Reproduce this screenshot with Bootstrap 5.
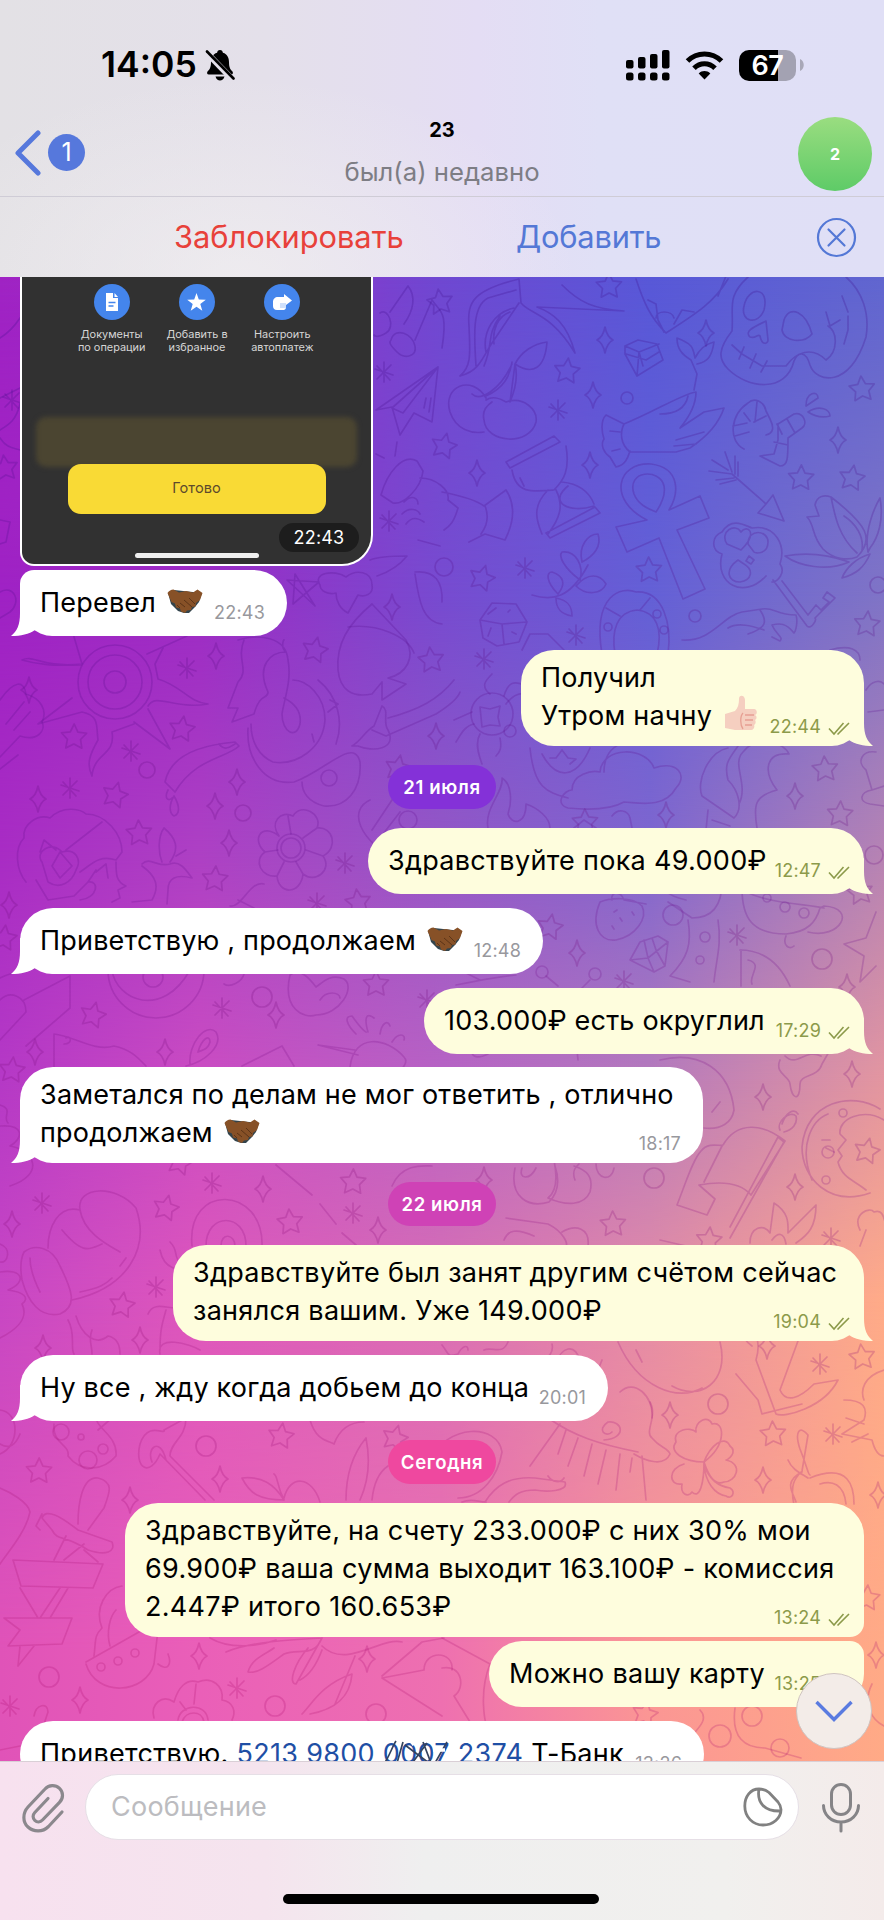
<!DOCTYPE html>
<html lang="ru">
<head>
<meta charset="utf-8">
<meta name="viewport" content="width=device-width, initial-scale=1">
<title>Чат</title>
<link href="https://cdn.jsdelivr.net/npm/bootstrap@5.3.0/dist/css/bootstrap.min.css" rel="stylesheet">
<style>
body{font-family:Inter,"Liberation Sans",sans-serif;background:#fff;color:#000;width:884px;height:1920px;overflow:hidden}
svg{display:block;flex:none}
.topbar{height:277px;background:radial-gradient(340px 200px at 240px 277px,rgba(244,242,242,.6),rgba(244,242,242,0)),linear-gradient(90deg,#e3e1e5 0%,#e4e0ea 30%,#e4ddf4 54%,#e0e0f6 68%,#e0dff6 100%)}
.statusbar{height:97px;padding:35px 80px 0 101px}
.barpart{height:60px}
.clock{font-size:35.5px;font-weight:600;line-height:60px;letter-spacing:0}
.battery{width:57px;height:31px;border-radius:10px;background:linear-gradient(90deg,#000 68%,#a3a2b2 68%);color:#fff;font-weight:600;font-size:27px;line-height:31px;letter-spacing:-.5px;margin-left:15px}
.navrow{height:100px;border-bottom:1.5px solid #cfccd6;padding:0 12px 0 15px}
.side{width:80px}
.unread{width:37px;height:37px;background:#5678dc;color:#fff;font-size:25px;line-height:37px;margin-left:6px}
.peer{font-size:20px;font-weight:700;line-height:24px;margin-top:21px;margin-left:-3px}
.seen{font-size:25.7px;line-height:32px;color:#7d7d84;margin-top:14px;margin-left:-3px}
.avatar{width:74px;height:74px;background:linear-gradient(#9add80,#5ecb67);color:#fff;font-weight:700;font-size:16px;margin-top:20px}
.actions{height:80px;font-size:30.8px;padding-left:174px;padding-right:27px}
.block{color:#e8413a;width:342px}.add{color:#5478d6;letter-spacing:-.2px}
.chat{height:1484px;overflow:hidden}
.mesh{inset:0}
.m1{background:linear-gradient(90deg,#a023c4,#9a2cc8 22.6%,#6f48d2 50%,#5858d8 73.5%,#6166d0)}
.m2{background:linear-gradient(90deg,#9f22c4,#9c2bc4 22.6%,#774bd0 50%,#6460d6 73.5%,#8074c6);-webkit-mask-image:linear-gradient(transparent 0,#000 323px);mask-image:linear-gradient(transparent 0,#000 323px)}
.m3{background:linear-gradient(90deg,#a82cc4,#ad40c4 22.6%,#9457c6 50%,#7e66cf 73.5%,#b683b4);-webkit-mask-image:linear-gradient(transparent 323px,#000 573px);mask-image:linear-gradient(transparent 323px,#000 573px)}
.m4{background:linear-gradient(90deg,#b539c6,#cb4cc2 22.6%,#b863c4 50%,#b67abc 73.5%,#e396a0);-webkit-mask-image:linear-gradient(transparent 573px,#000 803px);mask-image:linear-gradient(transparent 573px,#000 803px)}
.m5{background:linear-gradient(90deg,#c847c4,#de57bc 22.6%,#d96eb4 50%,#e58ca6 73.5%,#ffab88);-webkit-mask-image:linear-gradient(transparent 803px,#000 1023px);mask-image:linear-gradient(transparent 803px,#000 1023px)}
.m6{background:linear-gradient(90deg,#e053b8,#ea5fb8 22.6%,#ee70b0 50%,#fb9694 73.5%,#ffaa86);-webkit-mask-image:linear-gradient(transparent 1023px,#000 1373px);mask-image:linear-gradient(transparent 1023px,#000 1373px)}
.doodles{fill:none;stroke-width:1.7;stroke-linecap:round;stroke-linejoin:round}
.feed{padding:0 20px}
.photo{width:353px;height:289px;border:2px solid #fff;border-top:0;border-radius:0 0 31px 14px;background:#313131;overflow:hidden}
.tools{padding:7px 46px 0 47px}
.tool{width:85.5px;font-size:10.9px;line-height:12.6px;color:#d6d6d6;white-space:nowrap}
.dot{width:36px;height:36px;background:#4485ec;margin-bottom:8px}
.ghost{height:50px;margin:64px 14px 0 14px;border-radius:10px;background:#4b4531;filter:blur(2.5px)}
.done{width:258px;height:50px;margin:-3px auto 0;background:#f9da35;border-radius:13px;color:#5d4a2c;font-size:14.6px;position:relative}
.homelet{width:124px;height:5px;background:#efefef;margin-top:39px}
.stamp{right:12px;bottom:12px;width:80px;height:29px;background:#1d1d1d;color:#fff;font-size:18px;line-height:29px;letter-spacing:.2px}
.bubble{position:relative;isolation:isolate;font-size:27px;line-height:38px;white-space:nowrap;border-radius:33px;padding:9px 22px 11px 20px;height:96px;letter-spacing:.2px}
.figures{letter-spacing:.3px}
.solo{height:66px;line-height:66px;padding-top:0;padding-bottom:0}
.in{background:#fff;align-self:flex-start}
.out{background:#fefddd;align-self:flex-end;padding-right:14px}
.multi{width:560px}
.time{font-size:18px;line-height:18px;letter-spacing:.2px;color:#98989d;margin-bottom:-1px}
.solo .time{margin-bottom:14px}
.out .time{color:#8c9a4a;gap:7px}
.tail{position:absolute;z-index:-1;bottom:0;left:-9px}
.out .tail{left:auto;right:-9px;transform:scaleX(-1)}
.emo{display:inline-block;vertical-align:-3px;margin-left:3px}
.thumb{vertical-align:-6px;margin-top:-8px}
.day{width:108px;height:44px;font-size:18.6px;line-height:44px;font-weight:600;color:#fff;align-self:center;text-align:center;letter-spacing:.6px;margin-top:19px}
.lnk{color:#1f4fa5}
.scrollbtn{right:12px;bottom:12px;width:76px;height:76px;background:#f3ece8;border:1.5px solid #cfc3c0}
.composer{height:159px;background:linear-gradient(90deg,#f7e1ef 0%,#f5e4ee 30%,#efefef 48%,#f1f0ee 82%,#f4ebea 100%);border-top:1px solid #d9cfd6;padding:12px 23px 0 21px}
.field{width:714px;height:66px;border-radius:33px;background:#fff;border:1px solid #e6dfe6;padding:0 15px 0 25px;font-size:27px;letter-spacing:.25px;color:#bcbcc0;margin-left:20px}
.home{width:316px;height:10px;background:#000;margin:54px auto 0}
</style>
</head>
<body>
<svg width="0" height="0" class="position-absolute">
<defs>
<path id="star" d="M0-13L3.8-5 12.6-4 6.6 2.4 8 11 0 7-8 11-6.6 2.4-12.6-4-3.8-5Z"/>
<path id="spark" d="M0-13Q2-3 8 0 2 3 0 13-2 3-8 0-2-3 0-13Z"/>
<path id="burst" d="M0-10V10M-9-3 9 3M-7 7 7-7M-7-6 6 8"/>
<g id="shake"><path fill="#33444c" d="M1 4 7 1l28 3-3 9-4 5-6 6h-5l-6-2-7-7Z"/><path fill="#875127" d="M.5 4C2 2 4 .5 6.500.5L12 3.500 19 2l7 1.500L30.500.5 35.500 4 33 11l-4 3-.5 3.500-3.500.5-1 3-4 .5-2 2.500-4-1.500-1-3-4-1-1-4-3.500-1.500Z"/><path d="M13 14l5 4M17 11l8 7M22 9l6 6M10 16l3 3" stroke="#5c3417" stroke-width="1" fill="none"/></g>
<g id="tick"><path d="M1 6.500 6 12 15.500 1M9.500 12.500 21 1" fill="none" stroke="#8c9a4a" stroke-width="1.600"/></g>
<path id="tl" d="M9 0V13C9 25 6 31 0 36 10 36 18 34 24 30L42 36 40 8Z"/>
</defs>
</svg>

<header class="topbar">
 <div class="statusbar d-flex justify-content-between">
  <div class="barpart d-flex align-items-center"><span class="clock">14:05</span>
   <svg class="ms-2" width="30" height="32" viewBox="0 0 30 32"><path d="M15 1c1.700 0 2.800 1.200 2.900 2.700C22.500 5 24 9 24 13c0 6 1.500 7.500 3.500 9.500.8 1 .5 3-1.300 3H3.800c-1.800 0-2.100-2-1.300-3C4.500 20.500 6 19 6 13c0-4 1.500-8 6.100-9.300C12.200 2.200 13.300 1 15 1ZM10.500 27.500h9c-.6 2.500-2.500 4-4.500 4s-3.900-1.500-4.500-4Z"/><path d="M2 4 28 31" stroke="#e4e0ea" stroke-width="6"/><path d="M2 2.500 28.500 29.500" stroke="#000" stroke-width="2.600" stroke-linecap="round"/></svg>
  </div>
  <div class="barpart d-flex align-items-center">
   <svg width="44" height="32" viewBox="0 0 44 32"><rect x="0" y="11" width="7.500" height="8.500" rx="2"/><rect x="12" y="8" width="7.500" height="11.500" rx="2"/><rect x="24" y="5" width="7.500" height="14.500" rx="2"/><rect x="36" y="1" width="7.500" height="18.500" rx="2"/><rect x="0" y="23.500" width="7.500" height="8" rx="2.500"/><rect x="12" y="23.500" width="7.500" height="8" rx="2.500"/><rect x="24" y="23.500" width="7.500" height="8" rx="2.500"/><rect x="36" y="23.500" width="7.500" height="8" rx="2.500"/></svg>
   <svg style="margin-left:15px" width="39" height="30" viewBox="0 0 39 30"><path d="M2.500 11C12 1.500 27 1.500 36.500 11M9 18.300C15 12.300 24 12.300 30 18.300" fill="none" stroke="#000" stroke-width="5"/><path d="M19.500 29.500l-5.800-6c3.400-3.200 8.200-3.200 11.600 0Z"/></svg>
   <div class="battery text-center">67</div>
   <svg width="4" height="12" class="ms-1" viewBox="0 0 4 12"><path d="M0 0C5 2 5 10 0 12Z" fill="#a9a8b8"/></svg>
  </div>
 </div>
 <div class="navrow d-flex justify-content-between">
  <div class="side d-flex align-items-center" style="padding-top:12px">
   <svg width="27" height="46" viewBox="0 0 27 46"><path d="M23 3 3 23 23 43" fill="none" stroke="#5678dc" stroke-width="5" stroke-linecap="round" stroke-linejoin="round"/></svg>
   <div class="unread rounded-circle text-center">1</div>
  </div>
  <div class="text-center"><div class="peer">23</div><div class="seen">был(а) недавно</div></div>
  <div class="side d-flex justify-content-end"><div class="avatar rounded-circle d-flex align-items-center justify-content-center">2</div></div>
 </div>
 <div class="actions d-flex align-items-center">
  <div class="block">Заблокировать</div><div class="add">Добавить</div>
  <svg class="ms-auto" width="41" height="41" viewBox="0 0 41 41"><g fill="none" stroke="#5478d6" stroke-width="2.200" stroke-linecap="round"><circle cx="20.500" cy="20.500" r="18.500"/><path d="M12.500 12.500l16 16m0-16-16 16"/></g></svg>
 </div>
</header>

<main class="chat position-relative">
 <div class="mesh position-absolute m1"></div><div class="mesh position-absolute m2"></div><div class="mesh position-absolute m3"></div><div class="mesh position-absolute m4"></div><div class="mesh position-absolute m5"></div><div class="mesh position-absolute m6"></div>
 <svg class="doodles position-absolute top-0 start-0" width="884" height="1484" viewBox="0 277 884 1484" stroke="url(#ink)">
  <defs><linearGradient id="ink" gradientUnits="userSpaceOnUse" x1="0" y1="277" x2="0" y2="1761"><stop offset="0" stop-color="#3c0c8c" stop-opacity=".26"/><stop offset=".4" stop-color="#640a8c" stop-opacity=".23"/><stop offset=".75" stop-color="#a00f78" stop-opacity=".23"/><stop offset="1" stop-color="#b4146e" stop-opacity=".25"/></linearGradient></defs>
  <g id="bits"></g>
  <!-- swallow wing -->
  <path d="M460 376c12-10 10-24 9-50-2-24 4-36 50-47l2 24c10 12 30 10 54 50-8-30-22-40-38-46l87 4c-30-2-44-8-62-26M460 376c16-4 20-12 30-30l29-43M476 366c-2-30-4-60 12-68l28-8M486 352c-4-20 8-40 28-44M494 344c-2-14 4-28 16-32M484 366c10-24 2-30 16-50"/>
  <!-- music notes -->
  <path d="M380 313c8-6 16 14 6 20s-12 2-12 2M390 312l18-26c8 10 6 24-4 38M391 340c4-14 22-6 24 6 2 10-10 14-18 6s-8-10-6-12ZM415 340l17-40c8 12 16 10 10 48"/>
  <!-- paper plane -->
  <path d="M376 410l62-43-6 55-18-9-14 22-8-28ZM392 408l46-41-35 46ZM424 408l2-10M429 412l2-14M376 454l8 4M397 442l-2 14"/>
  <!-- cherries -->
  <path d="M486 398c-14-24-44-12-36 14 6 18 22 22 34 20M486 400c6-4 14-2 20 2 18-6 32 8 30 20-6 24-50 22-52-2-2-8 2-14 8-18M472 394c8 8 28-4 40-30M486 396c18-8 24-20 26-34M510 402c6-14 8-26 5-38 6-12 18-20 32-22-2 26-14 34-32 22Z"/>
  <!-- heart pendant -->
  <path d="M636 279c8 24 14 38 30 54 28-18 48-30 62-54M648 300l8 4 2 16 6 12M656 318c0-8 16-8 18 0M674 324l8-14 12 2M718 296l8-20"/>
  <!-- skull -->
  <path d="M748 277c-22 20-14 30-16 54-14 18-14 28-4 38 20 20 58 24 66-8 4-10 12-10 16 4 6 18 40 24 56-28 4-24-4-46-20-60M744 306c4-20 26-20 20 4-6 16-24 12-20-4ZM784 320c6-16 22-8 28 14-8 10-28 8-30-4ZM766 321c-12 6-22 10-16 16 6 2 8-4 10-1 2 10 8 8 8 4ZM732 345l10 9 20 12 24 0c10-14 26-20 40-6 12-8 12-28 2-34M744 347l-5 12M756 354l-6 14M767 361l-6 11M826 312l4 14 10-6M842 296l6 16M848 316v14l-4 14"/>
  <!-- diamonds -->
  <path d="M625 346l13-6 19 4 6 16-26 16-12-22ZM625 346l14 6 20-8M639 352l4 14M639 352l-2 24M626 354l20 6 13-8"/>
  <path d="M630 960l10-18 18-6 10 6-3 24-11 6ZM630 960l18-2 20-16M648 958l-4-18M648 958l6 14M652 938l4 12 9 16"/>
  <!-- hand with mermaid tail -->
  <path d="M624 424l-18-9c-6 6-4 18-2 24-4 6 0 14 6 18l6 10c10-2 12-10 14-16M624 424c-4 8-4 20 6 28l46 0 14-4c12-8 28-22 34-40l-20 4-24 16c10-12 16-24 16-36-14 2-42 20-72 32ZM676 440l28-8M674 446l22-2M660 414c18 0 26-8 28-18M694 390l3-16-6-14c-10-6-14-12-14-22 16 6 16 10 18 20 4-8 10-14 19-16-2 14-6 20-17 22M610 431l10 1M612 451l8-2"/>
  <!-- candy canes -->
  <path d="M744 449c-16-8-14-34 4-46 6-6 16-2 18 8l4 8c4 8 4 14-4 16M733 426l14-3M735 436l14-4M744 413l6 8M757 402l-2 20M766 416l-12 6M778 424l16-10c10-2 14 10 8 14l-14 10c0 20 0 28-8 28l-20-10 14-2 4-14ZM787 419l8 14M777 424l5 10M774 442l14 3M806 406c0-14 12-16 12-8ZM808 412c12-8 22-2 22 4-8 2-16 0-22-4Z"/>
  <!-- arrow -->
  <path d="M732 474l34 30-8 9 26 8-11-26-7 9M732 474l-23-3M728 470l-16-10M734 478l-18 2M736 480l-16 4M732 472l-7-20M735 474v-18M738 476v-14"/>
  <!-- hourglass -->
  <path d="M506 462l48-26 6 6-50 26ZM512 470c4 24 20 22 42 20 10-10 16-20 12-44M548 490c-16 16-12 30-6 44M562 482c20 2 28 12 32 22M546 533l49-26 5 6-50 25ZM556 490c8 16 4 28-8 44M520 478l4 8M568 486c-20 16 0 28 26 20"/>
  <!-- ankh -->
  <path d="M647 520c-40-20-30-58 4-56 30 4 28 30 18 46l31-14 9 22-32 12 28 59-22 10-24-61-32 14-11-25ZM634 494c-8-24 26-26 30-8 2 10-4 20-8 26-10-4-18-8-22-18Z"/>
  <!-- twig -->
  <path d="M532 595c20 6 38 4 56-30M558 594c-12-12-12-22-6-22 12 4 14 12 6 22ZM580 580c-16-12-22-24-18-28 14-2 22 14 18 28ZM582 562c-4-16 6-28 16-28 4 12-4 22-16 28ZM576 586c12-14 24-12 30-2-4 10-20 12-30 2ZM556 598c12 2 16 8 16 18-12-2-16-8-16-18Z"/>
  <!-- dice -->
  <path d="M480 620l12-17 24 1 11 18-8 20-22 4-14-8ZM480 620l22 4 25-2M502 624l2 20M488 614l8-6M508 612l2-2M488 636l3-8M512 632l4 2M522 650l8-16 18 0 16 16"/>
  <!-- handshake -->
  <path d="M381 495c6-22 22-42 36-34l6 10c-2 18-20 34-30 32ZM420 478c16 0 30 12 28 22l10 8c-4 14-8 18-14 22M404 502c8-8 14-4 14 2M402 514c8-8 16-4 18 0M406 524c6-8 12-6 18-2M418 540l22 6M442 492c20 4 34 8 42 14l22-16c8 12 10 28-1 50l-20-6-16 8M485 506c4 10 2 20-4 28"/>
  <!-- horseshoe -->
  <path d="M602 654c-10-60 20-68 34-62 28-2 36 34 32 62M615 654c-4-24 2-42 22-44 20 2 26 20 20 44M606 608l14 8M650 598l-10 12"/><circle cx="608" cy="627" r="4"/><circle cx="657" cy="614" r="4"/><circle cx="664" cy="630" r="4"/>
  <!-- key -->
  <path d="M766 576c-22 24-52 8-44-22-12-4-10-18 0-22 10-16 24-6 30-4 24-4 34 18 28 36 6 8-2 18-8 18M773 580l34 46c4 4 10-6 8-8l20-20-8-6-4 6 6 4-8 8-5-5-8 10-26-34M727 544c-8-12 8-22 14-12 6-8 18 0 0 18ZM748 544c0-16 20-14 20-2 0 12-12 12-14 10ZM738 560c-14 10-10 22 2 22 12-2 14-12 4-18ZM749 556l5 4-3 4-5-3Z"/>
  <!-- tulip -->
  <path d="M819 516l-12 1c8 8 4 18 16 32 10 10 24 12 34 8 18-18 10-32-26-60-6-2-14-2-16 8ZM831 497c4 20 8 40 26 56M844 516c12 8 20 20 18 34M868 552c-4-20 6-44 12-54 4 22-2 40-10 50ZM785 556c22-4 42-2 64 6-22 10-50 4-64-6ZM842 578c4-10 14-20 28-24-6 14-14 20-28 24Z"/>
  <!-- swallow lower -->
  <path d="M682 640c30 2 40-24 60-28l20-3c12-2 14 6 34 6 2 6 0 16-2 18-8-10-14-10-22-8 4 10 12 12 8 16l-8-4M728 628c10-6 24-2 36 2M760 610c8 12 6 18-12 24"/>
  <!-- fly agaric and big star -->
  <path d="M320 585c-8-12 14-16 26-8 10-8 26-6 26 8 2 10-8 12-14 10l-10 18c-8-4-12-12-12-20-8 2-16-2-16-8ZM370 560c10-4 24-4 37-4-8 10-18 16-30 20M287 580l32 2-26 22 2-30 20 32ZM415 572c20-2 28 10 27 30M415 574c4 28 8 48 27 50M348 627c30-4 60 10 66 26"/>
  <!-- sun -->
  <circle cx="115" cy="682" r="37"/><circle cx="115" cy="682" r="27"/><circle cx="115" cy="682" r="11"/>
  <path d="M147 654l40-18M81 665C50 666 36 664 22 660c12-6 18 8 60 4l-10-34M72 698l-34 26 44-12c18 4 14 14 16 28-8 14-12 24-6 36 2-24 24-20 20-44l22-8M148 709l22 40-36-27M148 706c8-14 26 4 60-2-20-2-26-18-50-25l-3-15 8-16"/>
  <path d="M0 700c14-20 24-20 26-6 14 4 22 16 16 28 4 8-4 20-22 14L0 757M18 755l-18 14M6 724l18-22M14 730l16-18"/>
  <!-- left edge sketches -->
  <path d="M0 338c10-6 16-14 20-20M0 398l20-10M0 430c10-6 16-10 20-26M0 438c6 10 14 10 20 12M0 592c14-8 22 10 10 20l-10 6M0 520l10 2-4 20-6 2"/>
  <!-- snake -->
  <path d="M244 640c-8 20 6 30-6 42l-10 26 10 0-6 14 22-8c6-22 14-14 14-22-12-26 2-40 18-40-6-4-2-14-2-12M238 640c20-6 48-4 50 20 4 20-4 40-6 54 0 18 14 26 18 10 2-14-8-22-16-26M293 680c14 0 32 16 32 40-2 28-28 46-52 42-14-6-22-20-22-38M248 728c-2 30 16 58 46 54 30-10 60-46 66-20 2 28-14 46-36 44-16-4-22-14-22-24M318 680c20 16 26 42 18 64M330 700l8 4M328 712l10-8M312 734l2 8"/><circle cx="329" cy="778" r="8"/>
  <!-- sabre -->
  <path d="M352 746c10-6 12-14 22-20l8-20c8 4 0 16 6 24 10 20-16 22-30 16ZM372 730l14 6 50-22c16-10 22-16 24-22M388 718c30-8 50-18 66-38"/>
  <!-- spade -->
  <path d="M338 670c2 20 14 28 34 24l10-12 0 18 24-16-18-6c18-4 28-20 18-38l-34-36c-24 20-36 40-34 66Z"/>
  <!-- fingers -->
  <path d="M165 782c4-20 24-36 70-40l4 4c-12 12-44 12-64 46ZM219 744c6 8 12 2 16 0M168 790c-4 8 0 12 4 8M174 796c-6 10-4 18 0 20 6-2 6-10 0-20Z"/>
  <path d="M485 1502c10-16 24-26 50-24l30 4c4 10-20 10-30 8-14 0-20 4-26 12M548 1476c4 6 12 8 16 2M462 1502c10-4 16 0 24 0"/>
  <!-- gypsy head -->
  <path d="M26 882c-10-12-12-34-2-44-2-14 14-24 26-20 14-14 32-8 36-4 20 0 36 20 36 38l-6 8c-18-6-26 6-36 12M102 822L66 850M36 880l12 20 26-4 14-14 8-12M42 862c-8-10 10-22 20-10 14-4 20 8 14 18-4 12-16 20-28 12ZM40 852l4-12 12 10M52 866l8-14 12 14-12 12ZM116 862c0 12 0 20 10 24l-8 4 2 8-8 4M96 872l10-8 2 14M80 900c18-2 20-20 8-18"/>
  <!-- apple -->
  <path d="M142 864c8-8 16 4 28 0 10-4 16 6 22 14-16-4-24 0-24 12l-1 14M142 866c14 10 18 20 10 34l-20 2M162 862c-4-10-4-26 2-34 12 10 16 20 6 34M176 856l10-6M264 884c-14-4-22 24-34 22M238 900l16 8"/>
  <!-- flowers -->
  <g id="flow"><circle cx="291" cy="848" r="14"/><circle cx="291" cy="848" r="10"/><path d="M279 836c-10-14 2-26 14-20 8-14 30-2 24 12 16-2 22 20 6 28 10 14-8 28-20 18-2 20-24 22-26 2-16 2-24-16-12-24-14-12-4-30 14-16ZM288 816l3 18M317 828l-14 10M323 856l-17-6M303 874l-7-12M277 876l7-14M265 852l13-2"/></g>
  <path d="M154 1718c-4-14 8-24 20-16 4-14 12-24 24-20 14-6 26 4 24 18 12 2 14 12 10 20M178 1720c2-16 28-18 30 0M182 1722c4-12 20-12 22 0M180 1702l6 8M196 1684l-2 20"/>
  <!-- spider -->
  <circle cx="492" cy="714" r="21"/><circle cx="510" cy="731" r="6"/><path d="M480 707l10 2 10-3-2 11 2 9-10-1-8 2ZM490 694c-10-8-4-14 2-20M504 696c4-14 10-16 22-10M506 704c6-8 12-12 20-10M472 712l-18 8M474 724c-10 2-14 12-18 18M480 734c-6 10 0 24 2 30M500 738c2 10 0 14-4 18"/>
  <!-- cloud -->
  <path d="M568 808c-14-4-4-18 4-18 0-16 20-20 28-18 2-26 46-26 54-4 24-8 34 8 22 20-12 22-40 14-52 14-14 8-36 8-56 6ZM530 748c4 40 16 44 38 50M542 754c14 26 34 26 48-6M550 758l6 0 6-8 6 8 8 1-6 5M604 772c0-20 12-28 20-28"/>
  <!-- goblet by the date -->
  <path d="M488 828c-4-20 16-36 14-50 10 6 10 24 6 36 4 12 18 10 18-10 12 4 24 14 24 24M574 828l10-8 12 8M612 816c6-8 16-6 18 2l2 10M398 860c-40-20-50-50-28-60M372 830l20-30M380 838l20-26"/><circle cx="408" cy="820" r="9"/>
  <!-- moon -->
  <path d="M739 804c10-20-8-40 4-52 16-20 42-8 46 2-24-2-26 18-12 36-22 6-24 14-20 38M728 748c-20 4-32 34-26 48l32 22c10-10 4-28-6-38-4-16 0-20 10-34M708 810l-2 20M712 820l18 6"/>
  <path d="M866 770c-10-8-4-20 10-18M866 770l6 20c-12 2-14 12-2 14l14 2M872 790l12-4M830 650c20-6 30 0 30 10M866 690c6-10 14-10 18-6M868 712l16-2"/>
  <!-- strawberry and bottle -->
  <path d="M600 902c-10 24 0 40 16 38 20-4 32-22 26-34-10-10-32-8-42-4ZM612 900c-2-8 8-10 12 0l22 4M612 926l2 3M620 918l2 3M632 912l2 3M614 912l3-2M686 900c-18-4-30-12-24-28M668 902l24 16c18 0 30-10 30-36M688 920c4 24 0 38-18 56l20 6M718 920c4 24-2 40-4 62"/><circle cx="705" cy="937" r="5"/><circle cx="700" cy="960" r="4"/><circle cx="673" cy="915" r="10"/>
  <!-- teapot -->
  <path d="M742 888c0 30 10 46 44 46 22-2 30-12 34-26l4-2c34 2 16 34-16 26M746 892c26 12 60 12 78 16M786 936c-4 10 4 14 8 10"/><circle cx="785" cy="907" r="5"/><circle cx="804" cy="913" r="5"/><circle cx="767" cy="898" r="4"/>
  <!-- seagull and spire -->
  <path d="M740 950c24 0 40 14 50 36M748 960c16 4 0 16 4 24M741 950v36M876 912l-10 26-22 6 20 12-4 26 16-16M456 985c20-4 40-8 60-10M480 980l-16-8M546 976l12 10M590 980l-8 8"/><circle cx="542" cy="972" r="6"/><circle cx="595" cy="974" r="6"/>
  <!-- envelope and disc at the left edge -->
  <path d="M24 1000l46-24 0 32-44 38M0 1000c10-10 26-4 26 12l-26 28M0 978c20-10 32-6 40-12"/><circle cx="156" cy="970" r="48"/><circle cx="153" cy="977" r="10"/><path d="M112 970c4 30 50 50 78 0M290 975c-8 34 14 44 26 40 24 0 40-28 28-36-14-6-22 4-28 8-6-8-16-20-26-12ZM320 1000c6-10 20-8 20-2M224 984c6 4 18-2 20-10"/>
  <path d="M54 1034c20 2 40 18 60 12 18 4 24 12 32 20M54 1034v34M64 1044c10 0 6-10 2-6M190 1064c-2-20 16-42 26-32 8 14-12 30-30 34M198 1052c4-14 12-18 12-10-2 8-8 8-12 10ZM242 1066l40-20 12 20M350 1067c4-34 36-30 54-10 4 4 0 10-4 14M355 1050l-37-5 40 10M356 1034c-10-10-12-18-4-18 6 8 10 14 14 16M368 1032c-4-14-2-20 6-14M380 1034c2-12 8-14 10-8M392 1042c6-10 14-8 12-2"/>
  <!-- boxing glove -->
  <path d="M48 1248c0-20 10-44 32-38-4-24 36-26 56-2 14 40-8 80-64 92M80 1210c4 24 30 36 40 42M62 1230c20 24 26 20 40 14M24 1252c10-8 28-6 36 14 12 24 18 40 0 48-20 4-32-12-38-34-2-12-2-20 2-28ZM30 1258c0 14 6 26 10 34M80 1292c20-4 26-8 32-14M120 1266l6-8M0 1244c12 4 8 20 0 18M0 1272c22-4 28 10 8 18 16 2 22 8 14 14 8 16-10 28-22 34"/>
  <!-- snail shell -->
  <path d="M192 1246c-6-64 72-60 70 0M206 1246c0-34 40-34 40 0M221 1246c0-14 14-12 14 0M160 1250c4 20 20 22 30 16M170 1242c8 8 4 12 8 18"/>
  <!-- flames and leaf -->
  <path d="M68 1320c8 14 2 28 6 34M76 1316c6 20 20 30 32 20 10 2 12 10 12 18M92 1330c-4 10 0 14 0 24M148 1314c6-14 20-4 36-6M160 1350c0-20 2-26 6-40M160 1354c-4-20 30-10 40-4M276 1165l36 30M320 1204l16 20M342 1233l14 12M392 1186c10-24 34-20 40-20M0 1105c14 4 2 12 8 18M0 1126c24-2 24 12 10 20 24 4 36 28 0 40"/>
  <!-- knots -->
  <path d="M515 1168c-6 30 14 40 34 34 10-10 10-24 6-36M554 1160c4 20 2 32-6 38 18 8 36 8 42-6 4-16-4-22-16-26M522 1168c-4 12 8 12 14 0M596 1164c0 16 16 18 18 4M575 1180c-4-10 2-14 4-16M506 1218l42 6c16 8 20 20 18 22M504 1240c4-10 12-12 30-4M562 1232c14-8 28-4 26 14M488 1054c-20 10-18-8-16-14M530 1050c4-20 36-30 50 0M576 1040l2 20M660 1060c40-10 70 10 74 50-2 12-12 20-30 18M712 1112l8-10"/>
  <!-- flag -->
  <path d="M677 1205c8-20 16-46 24-54 8-10 20-4 22-6 14-24 40-22 62-4l-34 54c-10-12-30-14-52-10l16 14-8 16ZM704 1182l18-36M730 1238l54-96-6-5-48 90M780 1130c-4-8 10-20 16-14 2 8-4 14-12 16M782 1124c4-12 12-16 16-10"/>
  <!-- ice cream -->
  <path d="M780 1060c-6 14 10 16 10 24 2 16 10 18 10 0 0-10 18-6 22-20l8-14M785 1056c12 12 20-8 36 0"/>
  <!-- moon face -->
  <path d="M870 1193c-40 14-68-14-68-46 4-46 50-56 78-38M884 1120c-20-12-46-2-44 14l6 6-8 10 4 6-4 6c4 16 16 18 28 28M812 1180c-14-34 0-60 16-66M822 1140l8 0M826 1148l8 4"/><circle cx="843" cy="1113" r="4"/><circle cx="828" cy="1152" r="6"/><circle cx="826" cy="1180" r="4"/>
  <!-- plant and bone -->
  <path d="M750 1243c0-16 14-20 20-10l4-30c16 10 14 22 14 30l28-28c0 22-8 30-20 38M772 1240c6-8 12-8 14 4M866 1230l-6 16M860 1230c-8-16 10-24 14-18 10-4 10 10 12 12M660 1240l26 6"/>
  <!-- ball and anchor -->
  <path d="M618 1342c20 46 60 60 84 46M720 1342c10 40-20 60-48 44M636 1350l6 12M620 1392c14-14 34 4 32 26M752 1346c-14-10-10-20-4-26 6 12 14 20 8 40l20 54c8 4 48-6 62-34l-24 4c-14 14-28 20-34 6l22-60M736 1374l22 26 4 14 40-10"/>
  <!-- octopus -->
  <path d="M442 1345c8 10 4 12 16 9 4-8 10-10 10-4M484 1350c8-4 18 6 24-8M556 1362c6-14 18-20 24-2l14 20 8-20M552 1344c2 8-4 14-8 16"/>
  <!-- eye -->
  <path d="M548 1418c26 18 50 26 90 34M560 1424l-30 42M566 1430l-8 24M578 1438l-10 28M592 1444l-8 32M606 1450l-8 34M620 1454l-4 36M632 1458l-2 14M642 1456l4 44M650 1402c8 14-6 30 2 36 8 10 16 10 18 16-6 14-26 6-36 0M604 1440c24-2 18-20 4-18-12 8-2 16 4 10"/>
  <!-- clover -->
  <path d="M704 1462c-20 0-36-10-28-20-4-12 14-16 20-10-2-10 12-18 16-8 12-4 16 20-8 38ZM704 1462c6-16 20-28 26-16 8 6-2 14-4 14 18 4 10 22-2 22-10 4-16-8-20-20ZM704 1462c0 20-4 38-12 30-4 6-12 2-10-8-14 2-14-16 2-20M704 1466c6 14 14 20 26 22 6 4 2 12-4 8-12-2-20-14-22-30"/>
  <!-- bananas -->
  <path d="M794 1505c-4-20 0-26 8-34l6-36c-8-10-14-4-8 14 8 20 8 26 10 26M788 1460c4 10 14 14 20 18M802 1472c-20 10-8 22-6 30M810 1478c40-16 44 10 44 26M820 1484c12-4 24 0 26 20M884 1370c-20 6-24 20-20 30M844 1400c20 0 24 8 20 20l-22 14 30 6c4 16 10 16 12 16M846 1418l18 6M852 1442l16-8"/>
  <!-- donut, match -->
  <path d="M54 1424c-2 20 16 20 14 32 14 18 36 14 48 0 2-20-20-28-20-38M0 1410c20 2 20 36 0 44M0 1444c10 6 16 0 20-10M98 1430l14-12"/><circle cx="61" cy="1432" r="8"/><circle cx="88" cy="1460" r="9"/><circle cx="103" cy="1449" r="5"/><circle cx="81" cy="1437" r="3"/>
  <path d="M205 1500l-45-46c-10 24-26 14-20-10 8-24 26-8 24-14l22-12c0 20-16 24-16 38l44 44M152 1462c-6-14 8-26 14-2M242 1478c20-2 32 6 42 22-24 0-34-6-42-22ZM284 1500c-8-16-6-24-10-26M284 1498c6-24 28-22 36 4M310 1420c6 20 16 20 24 24 6-16 16-22 30-22M346 1500c0-30 10-50 20-62 4 20 4 40-6 62M372 1500c2-20 10-30 16-34"/>
  <!-- dagger with ribbon -->
  <path d="M78 1524c0-20 4-48 20-46 16 4 12 14 6 30l-16 22M42 1518c4-10 18-2 36 12l34 12c4 10-6 14-24 8-24-16-30-8-36-20ZM40 1530l-4-4 6-12M66 1536l-12 24M84 1544l-20 16M13 1560l90 4-10 24-72-2ZM20 1588l18 30M68 1588l-18 30M60 1588l-20 30M84 1550l14 12M4 1618l68 0-10 26-54 2 12-16ZM34 1646l-16 20 2-20M0 1488c10 4 28 14 30 24-4 20-22 40-30 52"/>
  <!-- bowl -->
  <path d="M86 1662l60-34M86 1664c10 34 60 30 68 0l4-34M94 1656c2-16 0-20 8-28-8-20 4-40 20-42M110 1646c-4-14 0-30 6-36M158 1664c10 8 14 0 10-10"/><circle cx="101" cy="1667" r="4"/><circle cx="118" cy="1661" r="4"/><circle cx="135" cy="1653" r="4"/>
  <!-- palm and feather, letter -->
  <path d="M210 1638c20 12 50 8 66 2M226 1652c24-10 60-12 96-14-8 20-24 10-38 16-14 10-26 20-36 18 4-14 18-18 26-24M322 1638l-26 46c-8 0-2-20 12-36M322 1650c-6 16-14 26-22 30M322 1646c24 24 60-10 80-4M302 1714c10-10 20-30 50-40-2 26-20 36-42 40M355 1656l-20 48M382 1676l40-34 22-4M382 1678l60 38M382 1678l42-8M424 1670c0-20 30-20 28 0M34 1716c2-12 14-14 14-4l-4 12M428 1462c20-40 70-38 74-10-4 24-20 46-44 46M440 1462c14-20 48-20 52-6"/>
  <!-- notes at lower right -->
  <path d="M442 1638l48 26c-12 30-4 60-4 60M442 1668c20-4 24 20 12 28l16 26M735 1708c-4 30 10 40 30 40l36 10M700 1710c10 10-4 20-12 30"/><circle cx="752" cy="1716" r="10"/><circle cx="720" cy="1736" r="11"/><circle cx="780" cy="1748" r="9"/><path d="M872 1684c-10 20 0 36 12 42M0 1750l20-4"/>
 </svg>

 <div class="feed position-relative d-flex flex-column">
  <div class="photo position-relative">
   <div class="tools d-flex text-center">
    <div class="tool d-flex flex-column align-items-center"><div class="dot rounded-circle d-flex align-items-center justify-content-center"><svg width="14" height="19" viewBox="0 0 14 19"><path fill="#fff" d="M1 0h7v5h5v13H1Z M9.500 0 13 4H9.500Z"/><path d="M3.500 9.500h7M3.500 13h5" stroke="#4485ec" stroke-width="1.500"/></svg></div>Документы<br>по операции</div>
    <div class="tool d-flex flex-column align-items-center"><div class="dot rounded-circle d-flex align-items-center justify-content-center"><svg width="19" height="18" viewBox="0 0 19 18"><path fill="#fff" d="M9.500 0l2.300 6.500 7 .2-5.500 4.300 2 6.800-5.800-4-5.800 4 2-6.800L.2 6.700l7-.2Z"/></svg></div>Добавить в<br>избранное</div>
    <div class="tool d-flex flex-column align-items-center"><div class="dot rounded-circle d-flex align-items-center justify-content-center"><svg width="19" height="17" viewBox="0 0 19 17"><path fill="#fff" d="M11 0l8 6.500-8 6V9H7v5h6c-1 2-2 2-3 2H4c-3 0-4-2-4-4V8c0-3 2-5 5-5h6Z"/><path fill="#cfe0fb" d="M7 9h6v5H7Z"/></svg></div>Настроить<br>автоплатеж</div>
   </div>
   <div class="ghost"></div>
   <div class="done d-flex align-items-center justify-content-center">Готово</div>
   <div class="homelet rounded-pill mx-auto"></div>
   <div class="stamp position-absolute rounded-pill text-center">22:43</div>
  </div>

  <div class="bubble solo in d-flex justify-content-between align-items-end" style="width:267px;margin-top:4px;border-top-left-radius:14px"><span>Перевел <svg class="emo" width="36" height="26" viewBox="0 0 36 26"><use href="#shake"/></svg></span><span class="time">22:43</span><svg class="tail" width="42" height="36"><use href="#tl" fill="#fff"/></svg></div>

  <div class="bubble out d-flex justify-content-between align-items-end" style="width:343px;margin-top:14px"><span>Получил<br>Утром начну <svg class="emo thumb" width="34" height="36" viewBox="0 0 34 36"><path fill="#f5cfc0" d="M2 19l10-3c3-3 4-7 4-12 0-5 6-4 6 1v9h9c3 0 4 5 1 6 2 1 2 4 0 5 1 1 1 4-1 5 1 1 0 5-3 5H12l-10-2Z"/><path d="M22 20h9M22 25h8M22 30h7M20 18c-3 3-3 12 0 16" stroke="#e69f92" stroke-width="1.300" fill="none"/></svg></span><span class="time d-flex">22:44<svg width="22" height="14" viewBox="0 0 22 14" class="align-self-end"><use href="#tick"/></svg></span><svg class="tail" width="42" height="36"><use href="#tl" fill="#fefddd"/></svg></div>

  <div class="day rounded-pill" style="background:#8431d8">21 июля</div>

  <div class="bubble solo out d-flex justify-content-between align-items-end" style="width:496px;margin-top:19px"><span class="figures">Здравствуйте пока 49.000₽</span><span class="time d-flex">12:47<svg width="22" height="14" viewBox="0 0 22 14" class="align-self-end"><use href="#tick"/></svg></span><svg class="tail" width="42" height="36"><use href="#tl" fill="#fefddd"/></svg></div>

  <div class="bubble solo in d-flex justify-content-between align-items-end" style="width:523px;margin-top:14px"><span>Приветствую , продолжаем <svg class="emo" width="36" height="26" viewBox="0 0 36 26"><use href="#shake"/></svg></span><span class="time">12:48</span><svg class="tail" width="42" height="36"><use href="#tl" fill="#fff"/></svg></div>

  <div class="bubble solo out d-flex justify-content-between align-items-end" style="width:440px;margin-top:14px"><span>103.000₽ есть округлил</span><span class="time d-flex">17:29<svg width="22" height="14" viewBox="0 0 22 14" class="align-self-end"><use href="#tick"/></svg></span><svg class="tail" width="42" height="36"><use href="#tl" fill="#fefddd"/></svg></div>

  <div class="bubble in d-flex justify-content-between align-items-end" style="width:683px;margin-top:13px"><span class="multi">Заметался по делам не мог ответить , отлично<br>продолжаем <svg class="emo" width="36" height="26" viewBox="0 0 36 26"><use href="#shake"/></svg></span><span class="time">18:17</span><svg class="tail" width="42" height="36"><use href="#tl" fill="#fff"/></svg></div>

  <div class="day rounded-pill" style="background:#cf42b6">22 июля</div>

  <div class="bubble out d-flex justify-content-between align-items-end" style="width:691px;margin-top:19px"><span class="multi figures">Здравствуйте был занят другим счётом сейчас<br>занялся вашим. Уже 149.000₽</span><span class="time d-flex">19:04<svg width="22" height="14" viewBox="0 0 22 14" class="align-self-end"><use href="#tick"/></svg></span><svg class="tail" width="42" height="36"><use href="#tl" fill="#fefddd"/></svg></div>

  <div class="bubble solo in d-flex justify-content-between align-items-end" style="width:588px;margin-top:14px"><span>Ну все , жду когда добьем до конца</span><span class="time">20:01</span><svg class="tail" width="42" height="36"><use href="#tl" fill="#fff"/></svg></div>

  <div class="day rounded-pill" style="background:#ef489f">Сегодня</div>

  <div class="bubble out d-flex justify-content-between align-items-end" style="width:739px;height:134px;margin-top:19px;border-bottom-right-radius:14px"><span class="multi figures">Здравствуйте, на счету 233.000₽ с них 30% мои<br>69.900₽ ваша сумма выходит 163.100₽ - комиссия<br>2.447₽ итого 160.653₽</span><span class="time d-flex">13:24<svg width="22" height="14" viewBox="0 0 22 14" class="align-self-end"><use href="#tick"/></svg></span></div>

  <div class="bubble solo out d-flex justify-content-between align-items-end" style="width:375px;margin-top:4px;border-top-right-radius:14px"><span class="figures">Можно вашу карту</span><span class="time d-flex">13:25<svg width="22" height="14" viewBox="0 0 22 14" class="align-self-end"><use href="#tick"/></svg></span></div>

  <div class="bubble solo in d-flex justify-content-between align-items-end" style="width:684px;margin-top:14px"><span class="figures">Приветствую. <span class="lnk">5213 9800 <span class="position-relative">0007<svg class="position-absolute start-0 top-0" width="72" height="30" viewBox="0 0 72 30"><path d="M1 27C6 20 10 8 13 4M14 26 20 5M22 8 46 26M30 25 44 6M52 26 64 5M40 5 48 26" fill="none" stroke="#34435e" stroke-width="1.700"/><path d="M26 1 31 8M50 13l12 0M46 4h16" stroke="#fff" stroke-width="3.500"/></svg></span> 2374</span> Т-Банк</span><span class="time">13:26</span></div>
 </div>

 <button class="scrollbtn position-absolute rounded-circle d-flex align-items-center justify-content-center p-0" aria-label="Вниз"><svg width="40" height="24" viewBox="0 0 40 24"><path d="M2.500 3 20 20.500 37.500 3" fill="none" stroke="#5a7be0" stroke-width="3.400"/></svg></button>
</main>

<footer class="composer">
 <div class="d-flex align-items-center">
  <svg width="44" height="52" viewBox="0 0 44 52"><path d="M41 31 27.500 45.500c-6 6-15 5.500-20.500.5s-5.500-14 0-20L24 8c4-4.500 10.500-4.500 14.500-.7s4 9.800 0 14L21.500 39c-2.300 2.400-5.500 2.400-7.700.3s-2.300-5.400 0-7.800L27 17.500" fill="none" stroke="#8b888d" stroke-width="3.200" stroke-linecap="round"/></svg>
  <div class="field d-flex align-items-center justify-content-between"><span>Сообщение</span>
   <svg width="40" height="40" viewBox="0 0 40 40"><path d="M16 2C7.500 2 1.800 9.500 1.800 19c0 11 8 19 18.200 19s18-7 18-15.500c0-3-1-5-3-7.500L26 5.500C23 3 20 2 16 2ZM16 2c-2.500 14 6 22.500 21.500 22" fill="none" stroke="#818181" stroke-width="2.800" stroke-linejoin="round"/></svg></div>
  <svg class="ms-auto" width="40" height="52" viewBox="0 0 40 52"><g fill="none" stroke="#858487" stroke-width="3" stroke-linecap="round"><rect x="10.500" y="3.500" width="19" height="30" rx="9.500"/><path d="M2.500 24.500c0 9 7.500 16.500 17.500 16.500s17.500-7.500 17.500-16.500M20 41v9"/></g></svg>
 </div>
 <div class="home rounded-pill"></div>
</footer>
<script src="https://cdn.jsdelivr.net/npm/bootstrap@5.3.0/dist/js/bootstrap.bundle.min.js"></script>
<script>
// scattered small ornaments of the wallpaper: [x, y] centres
const ornaments = {
 star: [[440,302],[609,286],[567,371],[444,446],[862,389],[801,478],[852,478],[482,578],[649,570],[867,624],[315,650],[431,660],[74,737],[182,729],[115,795],[139,833],[215,879],[398,768],[358,902],[376,984],[4,938],[93,1015],[825,769],[840,814],[550,927],[860,892],[585,822],[12,1070],[166,1208],[290,1222],[353,1182],[122,1305],[180,1162],[613,1224],[709,1240],[867,1151],[862,1357],[39,1471],[281,1436],[395,1438],[773,1434],[867,1598],[645,1714],[5,468]],
 spark: [[605,340],[706,333],[593,395],[477,473],[590,465],[838,440],[392,607],[216,656],[29,690],[38,799],[237,782],[215,806],[229,843],[436,736],[9,905],[276,1015],[795,796],[666,815],[577,953],[847,987],[35,1052],[165,1052],[12,1224],[263,1189],[378,1230],[140,1340],[43,1348],[763,1097],[852,1074],[484,1180],[795,1187],[767,1346],[670,1415],[130,1500],[220,1479],[80,1700],[199,1656],[367,1659],[763,1480],[878,1495],[876,1655]],
 burst: [[558,410],[525,568],[576,635],[384,372],[389,521],[187,668],[131,751],[70,788],[345,863],[317,903],[222,1008],[427,1000],[484,659],[737,935],[624,981],[42,1203],[212,1183],[353,1213],[156,1287],[831,1238],[820,1364],[10,1706],[237,1688],[833,1434],[12,400]]
};
const dots = [[627,398,6],[695,616,6],[878,585,8],[147,770,8],[243,813,8],[262,997,10],[874,855,9],[822,959,10],[654,1178,10],[718,1404,10],[206,1446,10],[49,1677,10],[275,1706,10],[376,1714,10],[444,567,9]];
// ornament ink shifts from violet at the top to magenta at the bottom
const ink = y => {
  const t = (y - 277) / 1484;
  return `rgba(${Math.round(60 + 120 * t)},14,${Math.round(140 - 30 * t)},.24)`;
};
let out = '';
for (const [id, pts] of Object.entries(ornaments))
  pts.forEach(([x, y], i) => out += `<use href="#${id}" stroke="${ink(y)}" transform="translate(${x} ${y}) rotate(${id === 'star' ? (i * 7) % 25 - 8 : 0})"/>`);
dots.forEach(([x, y, r]) => out += `<circle cx="${x}" cy="${y}" r="${r}" stroke="${ink(y)}"/>`);
document.getElementById('bits').innerHTML = out;
</script>
</body>
</html>
